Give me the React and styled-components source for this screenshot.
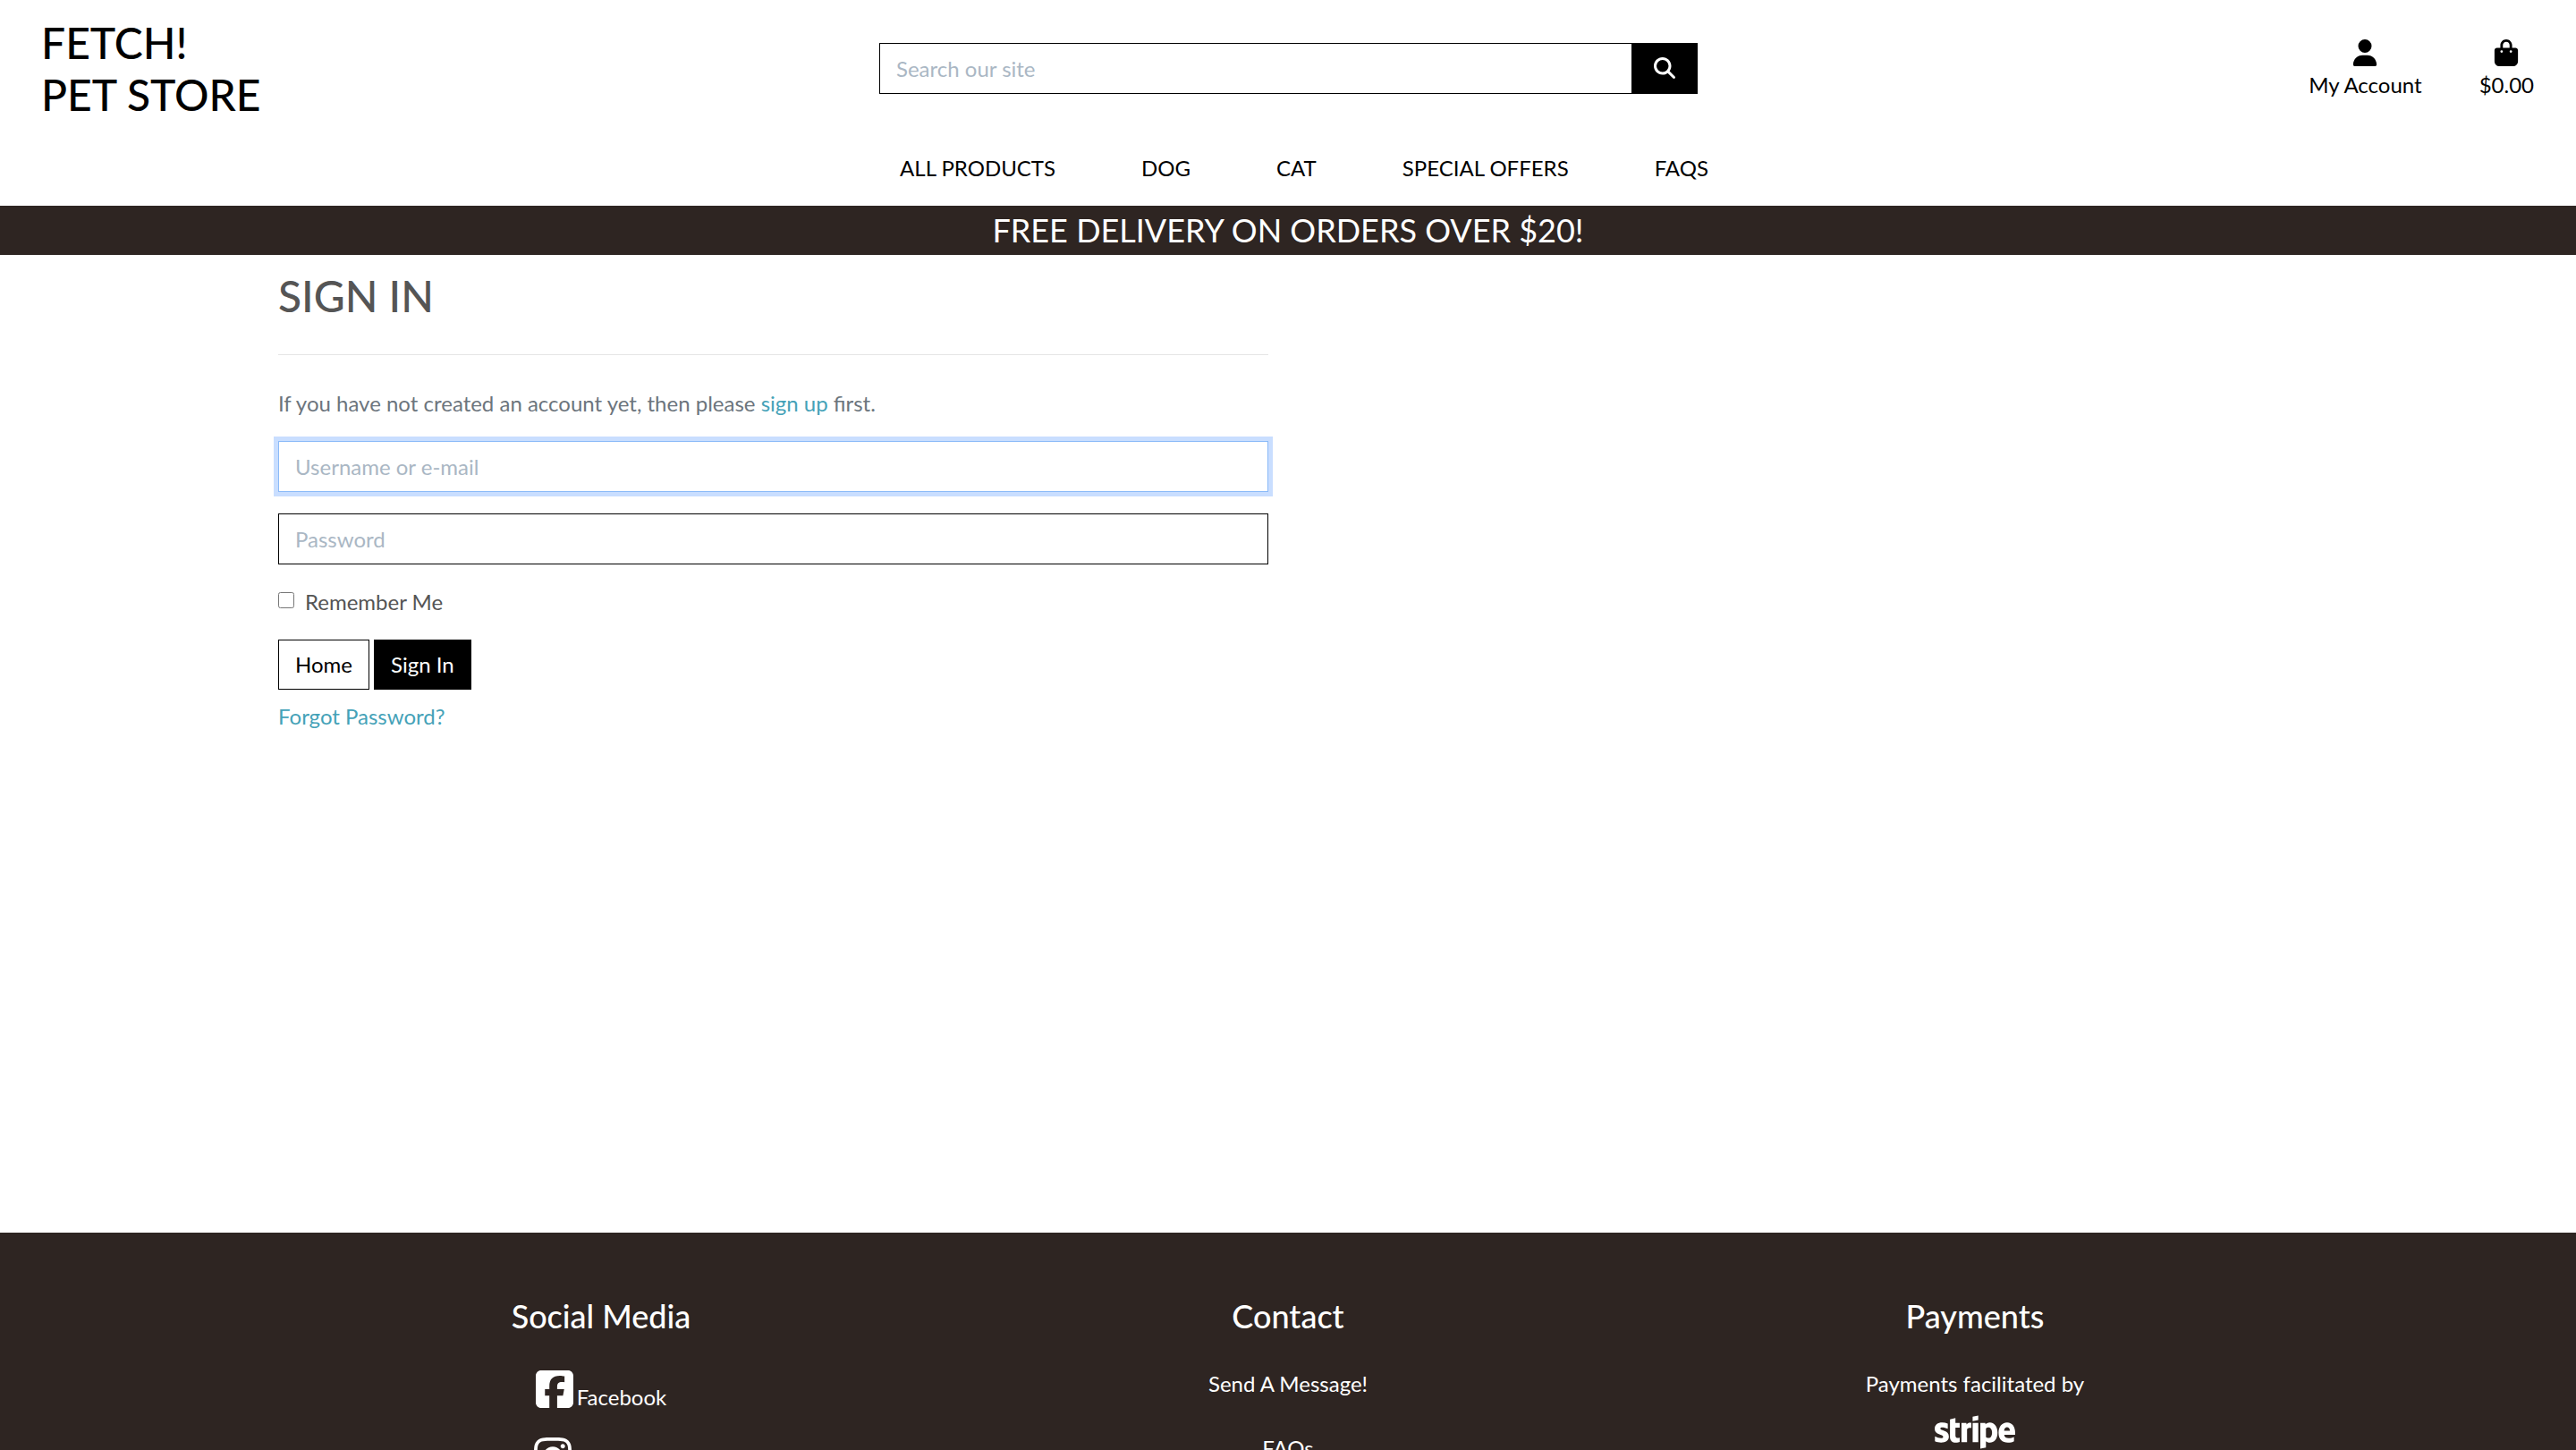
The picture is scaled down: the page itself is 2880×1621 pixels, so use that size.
import React from "react";
import styled, { createGlobalStyle, css } from "styled-components";
import {
  FaUser,
  FaBagShopping,
  FaMagnifyingGlass,
  FaSquareFacebook,
  FaInstagram,
  FaStripe,
} from "react-icons/fa6";

const GlobalStyle = createGlobalStyle`
  *, *::before, *::after { box-sizing: border-box; }
  body {
    margin: 0;
    background: #fff;
    color: #555;
    font-family: Lato, sans-serif;
    font-size: 24px;
    line-height: 36px;
  }
  a { color: inherit; text-decoration: none; }
  ul { list-style: none; margin: 0; padding: 0; }
  h1, h2, h3, p { margin: 0; font-weight: 500; }
  p { font-weight: 400; }
  input, button { font: inherit; border-radius: 0; margin: 0; }
  svg { display: block; flex: none; }
`;

const Page = styled.div`
  height: 100vh;
  overflow-y: auto;
  scrollbar-width: none;
`;

const TopBar = styled.div`
  display: grid;
  grid-template-columns: repeat(3, 1fr);
  align-items: center;
  padding: 19px 0;
  color: #000;
`;

const Logo = styled.h2`
  padding-left: 46px;
  font-size: 48px;
  line-height: 58px;
`;

const Search = styled.form`
  display: flex;
  padding: 0 22px 2px 23px;
`;

const fieldStyle = css`
  width: 100%;
  min-width: 0;
  height: 57px;
  padding: 9px 18px;
  border: 1px solid #000;
  outline: none;
  background: #fff;
  color: #000;
  &::placeholder {
    color: #aab7c4;
    opacity: 1;
  }
`;

const SearchInput = styled.input`
  ${fieldStyle}
  flex: 1;
  border-right: 0;
`;

const SearchButton = styled.button`
  display: flex;
  align-items: center;
  padding: 0 25px;
  border: 0;
  background: #000;
  color: #fff;
`;

const Account = styled.ul`
  display: flex;
  justify-content: flex-end;
  gap: 64px;
  padding-right: 47px;
`;

const AccountLink = styled.a`
  display: flex;
  flex-direction: column;
  align-items: center;
  padding-top: 3px;
  gap: 3px;
`;

const Nav = styled.nav`
  display: flex;
  justify-content: center;
  gap: 96px;
  padding: 16px 0 24px 36px;
  color: #000;
`;

const Banner = styled.div`
  padding: 6px;
  background: #2e2522;
  color: #fff;
  text-align: center;
  font-size: 36px;
  line-height: 43px;
`;

const Main = styled.main`
  width: 80%;
  min-height: calc(100vh - 528px);
  margin: 0 auto;
  padding-top: 17px;
`;

const Column = styled.section`
  width: 50%;
  padding: 0 22px 0 23px;
`;

const Title = styled.h1`
  font-size: 48px;
  line-height: 58px;
`;

const Divider = styled.hr`
  margin: 36px 0;
  border: 0;
  border-top: 1px solid #e5e5e5;
`;

const Intro = styled.p`
  color: #6c757d;
`;

const TextLink = styled.a`
  color: #45a2b8;
`;

const Form = styled.form`
  display: flex;
  flex-direction: column;
  gap: 24px;
  padding-top: 24px;
`;

const Field = styled.input`
  ${fieldStyle}
  &:focus {
    border-color: #8bbaf8;
    box-shadow: 0 0 0 5px #c9deff;
  }
`;

const Remember = styled.label`
  display: flex;
  gap: 12px;
`;

const Check = styled.input`
  width: 18px;
  height: 18px;
  margin-top: 7px;
`;

const Actions = styled.div`
  display: flex;
  gap: 5px;
`;

const Button = styled.button`
  height: 56px;
  padding: 0 18px;
  border: 1px solid #000;
  background: ${(p) => (p.$solid ? "#000" : "#fff")};
  color: ${(p) => (p.$solid ? "#fff" : "#000")};
`;

const Forgot = styled(TextLink)`
  display: inline-block;
  padding-top: 12px;
`;

const Footer = styled.footer`
  background: #2e2522;
  color: #fff;
  padding: 72px 0;
`;

const FooterColumns = styled.div`
  display: grid;
  grid-template-columns: repeat(3, 1fr);
  width: 80%;
  margin: 0 auto;
  text-align: center;
`;

const FooterTitle = styled.h3`
  margin-bottom: 36px;
  font-size: 36px;
  line-height: 43px;
`;

const FooterLinks = styled.ul`
  display: flex;
  flex-direction: column;
  align-items: center;
  gap: 36px;
`;

const SocialLinks = styled.ul`
  display: flex;
  flex-direction: column;
  align-items: center;
  gap: 24px;
`;

const SocialLink = styled.a`
  display: flex;
  align-items: flex-start;
  gap: 4px;

  svg {
    width: 42px;
    height: 48px;
  }
`;

const SocialName = styled.span`
  padding-top: 15px;
`;

const Payments = styled.div`
  display: flex;
  flex-direction: column;
  align-items: center;
`;

const StripeMark = styled(FaStripe)`
  width: 90px;
  height: 72px;
`;

const categories = ["ALL PRODUCTS", "DOG", "CAT", "SPECIAL OFFERS", "FAQS"];

export default function App() {
  return (
    <>
      <GlobalStyle />
      <Page>
        <header>
          <TopBar>
            <Logo>
              <a href="#home">
                FETCH!
                <br />
                PET STORE
              </a>
            </Logo>
            <Search role="search">
              <SearchInput type="text" placeholder="Search our site" aria-label="Search our site" />
              <SearchButton type="button" aria-label="Search">
                <FaMagnifyingGlass size={24} />
              </SearchButton>
            </Search>
            <Account>
              <li>
                <AccountLink href="#account">
                  <FaUser size={30} />
                  My Account
                </AccountLink>
              </li>
              <li>
                <AccountLink href="#bag">
                  <FaBagShopping size={30} />
                  $0.00
                </AccountLink>
              </li>
            </Account>
          </TopBar>
          <Nav>
            {categories.map((name) => (
              <a key={name} href="#products">
                {name}
              </a>
            ))}
          </Nav>
        </header>
        <Banner>FREE DELIVERY ON ORDERS OVER $20!</Banner>
        <Main>
          <Column>
            <Title>SIGN IN</Title>
            <Divider />
            <Intro>
              If you have not created an account yet, then please{" "}
              <TextLink href="#signup">sign up</TextLink> first.
            </Intro>
            <Form>
              <Field
                type="text"
                placeholder="Username or e-mail"
                aria-label="Username or e-mail"
                autoFocus
              />
              <Field type="password" placeholder="Password" aria-label="Password" />
              <Remember htmlFor="remember">
                <Check id="remember" type="checkbox" />
                Remember Me
              </Remember>
              <Actions>
                <Button type="button">Home</Button>
                <Button type="button" $solid>
                  Sign In
                </Button>
              </Actions>
            </Form>
            <Forgot href="#reset">Forgot Password?</Forgot>
          </Column>
        </Main>
        <Footer>
          <FooterColumns>
            <div>
              <FooterTitle>Social Media</FooterTitle>
              <SocialLinks>
                <li>
                  <SocialLink href="#facebook">
                    <FaSquareFacebook />
                    <SocialName>Facebook</SocialName>
                  </SocialLink>
                </li>
                <li>
                  <SocialLink href="#instagram">
                    <FaInstagram />
                    <SocialName>Instagram</SocialName>
                  </SocialLink>
                </li>
              </SocialLinks>
            </div>
            <div>
              <FooterTitle>Contact</FooterTitle>
              <FooterLinks>
                <li>
                  <a href="#message">Send A Message!</a>
                </li>
                <li>
                  <a href="#faqs">FAQs</a>
                </li>
              </FooterLinks>
            </div>
            <div>
              <FooterTitle>Payments</FooterTitle>
              <Payments>
                <p>Payments facilitated by</p>
                <StripeMark />
              </Payments>
            </div>
          </FooterColumns>
        </Footer>
      </Page>
    </>
  );
}
